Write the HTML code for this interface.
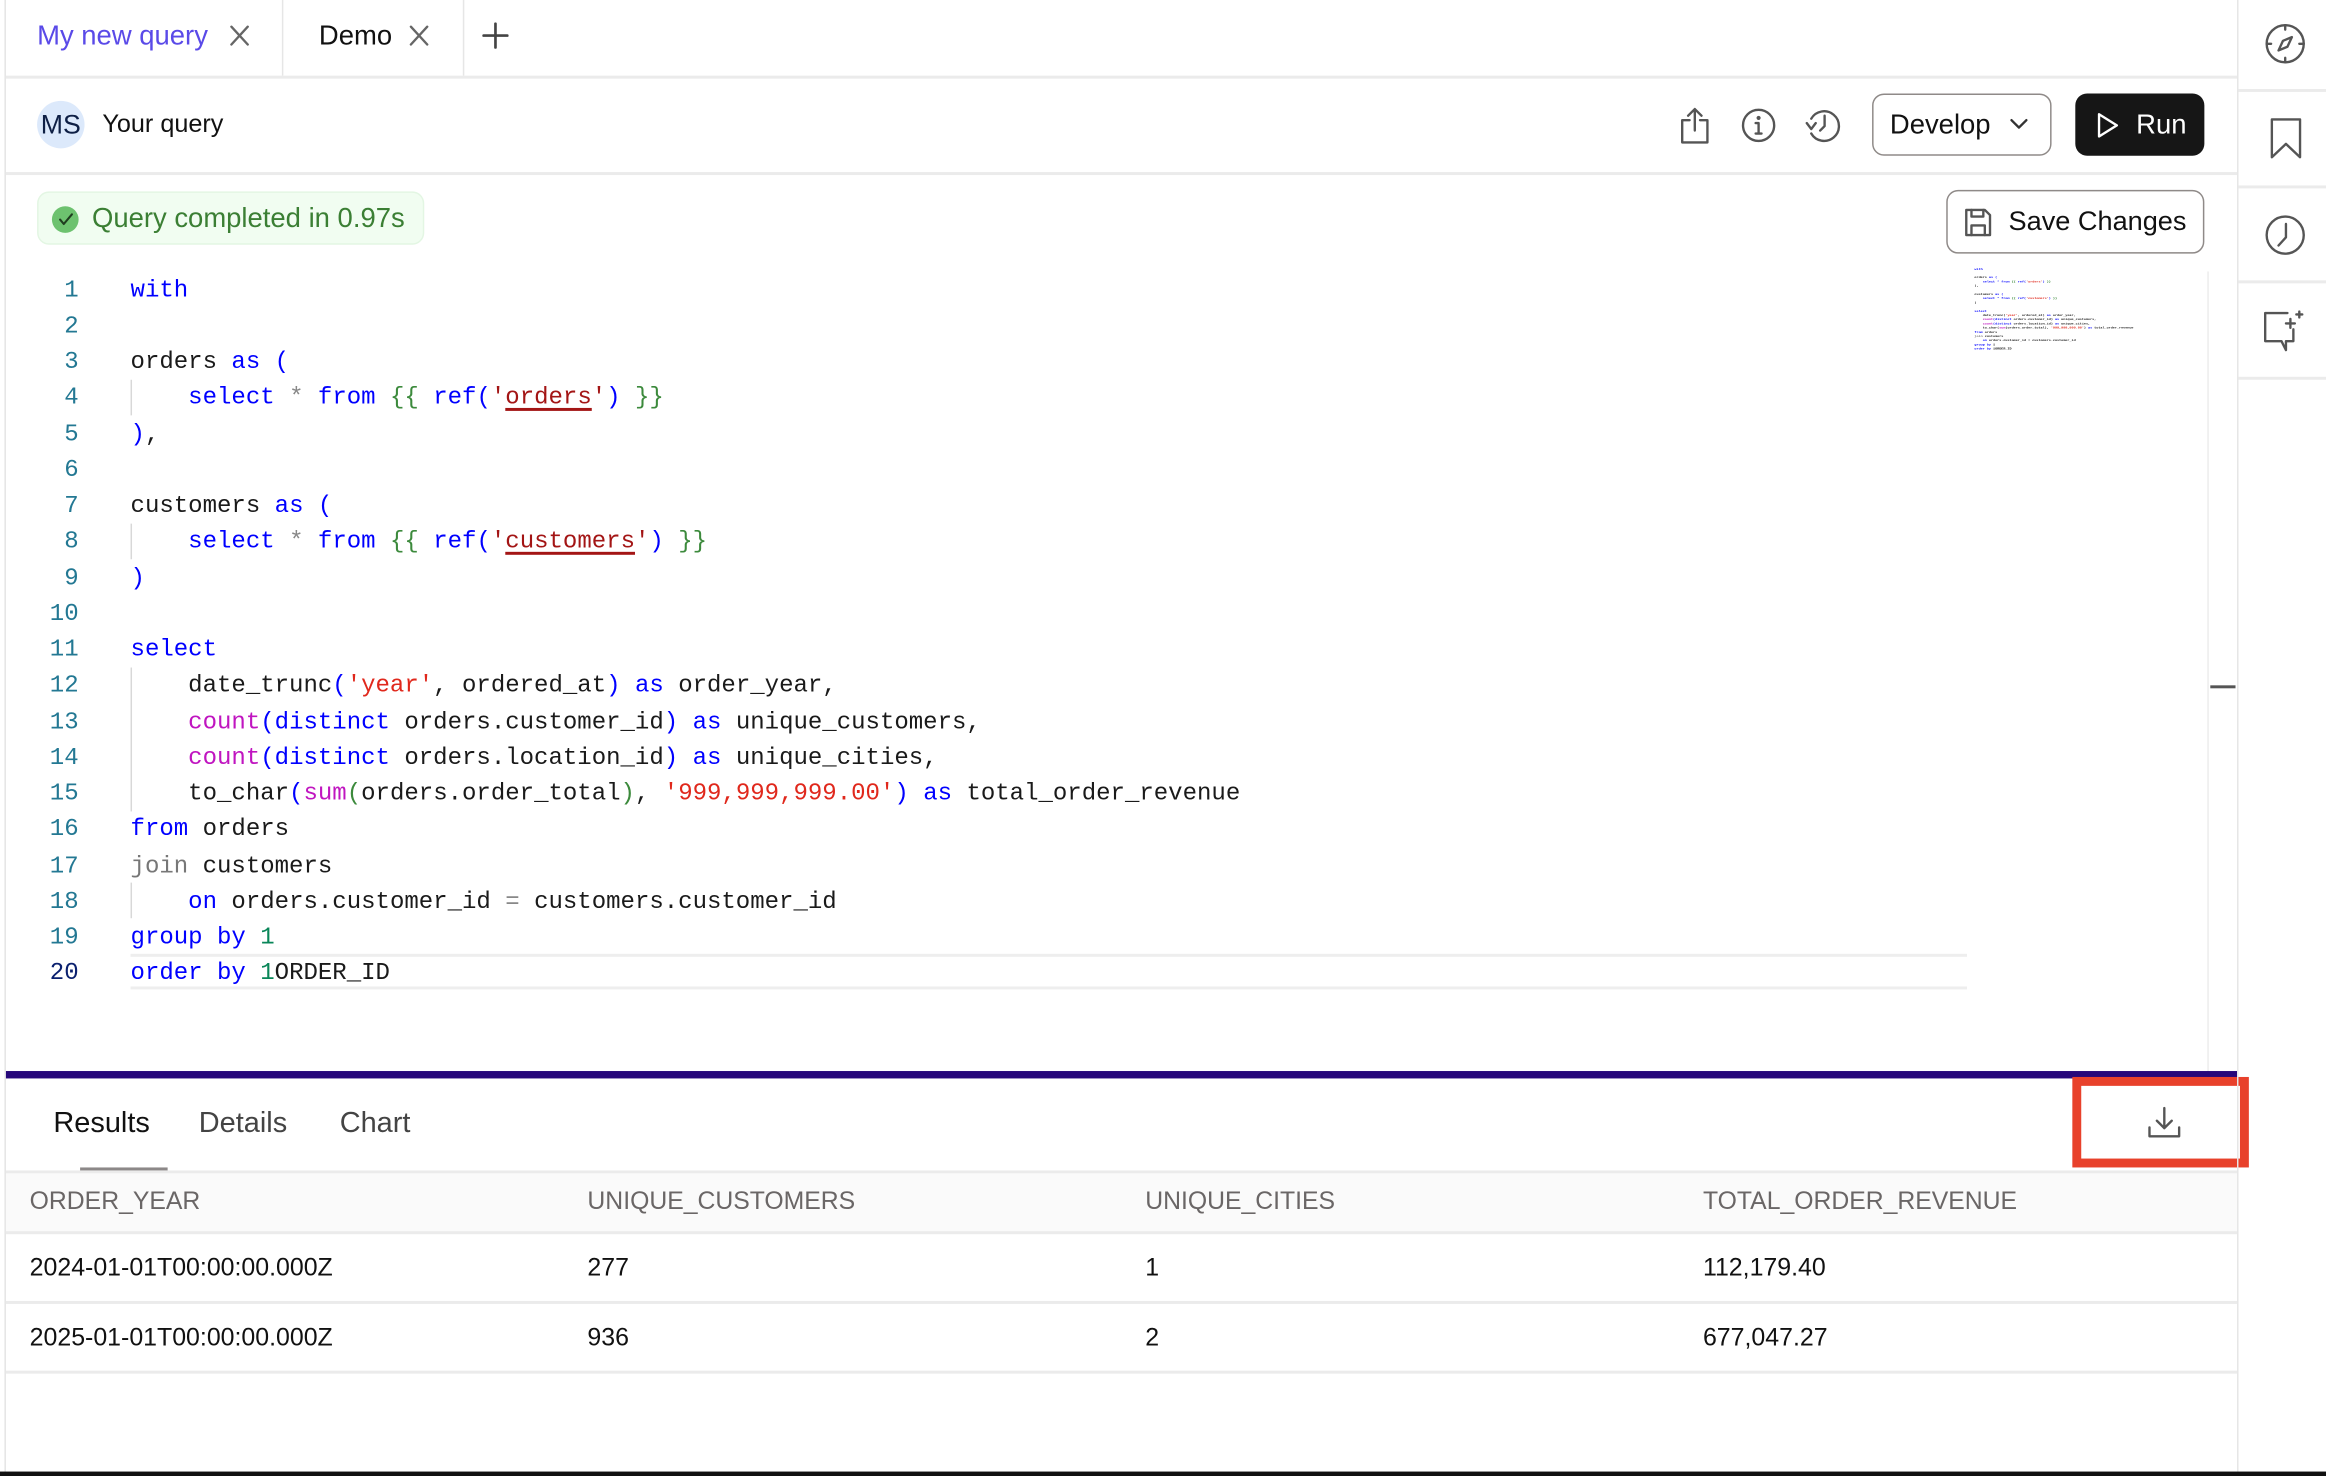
<!DOCTYPE html>
<html><head><meta charset="utf-8"><style>
*{box-sizing:border-box;margin:0;padding:0}
html,body{width:2326px;height:1476px;overflow:hidden;background:#fff}
#w{position:absolute;left:0;top:0;width:1568px;height:995px;transform:scale(1.48342);transform-origin:0 0;font-family:"Liberation Sans",sans-serif;color:#1a1a1a;background:#fff}
.a{position:absolute}
.hl{position:absolute;height:2px;background:#ebebeb}
.vl{position:absolute;width:1px;background:#e6e6e6}
.code{position:absolute;left:0;top:183.5px;font-family:"Liberation Mono",monospace;font-size:16.2px;line-height:24.26px;white-space:pre}
.ln{position:absolute;left:20px;width:33px;text-align:right;color:#237893}
.cl{position:absolute;left:88px}
.k{color:#0000ff}.g{color:#3c8a3c}.s{color:#a31515;text-decoration:underline;text-decoration-thickness:2px;text-underline-offset:3px}
.r{color:#e0281c}.m{color:#c015c0}.j{color:#777}.n{color:#098658}.st{color:#888}
.ig{position:absolute;left:88px;width:1px;background:#d8d8d8}
svg{position:absolute;fill:none;stroke:#555;stroke-width:1.6;stroke-linecap:round;stroke-linejoin:round}
</style></head><body><div id="w">
<div class="vl" style="left:3px;top:0;height:995px;background:#e4e4e4"></div>
<div class="a" style="left:25px;top:13px;font-size:18.5px;color:#5a4ae8">My new query</div>
<svg style="left:155px;top:17px" width="13" height="14"><path d="M1 1L12 13M12 1L1 13" stroke="#666"/></svg>
<div class="vl" style="left:190px;top:0;height:51px"></div>
<div class="a" style="left:215px;top:13px;font-size:18.5px;color:#111">Demo</div>
<svg style="left:276px;top:17px" width="13" height="14"><path d="M1 1L12 13M12 1L1 13" stroke="#666"/></svg>
<div class="vl" style="left:312px;top:0;height:51px"></div>
<svg style="left:325px;top:15px" width="18" height="18"><path d="M9 1V17M1 9H17" stroke="#444" stroke-width="1.8"/></svg>
<div class="hl" style="left:4px;top:51px;width:1504px"></div>
<div class="a" style="left:25px;top:68px;width:32px;height:32px;border-radius:50%;background:#dce9fb;color:#0e1f45;font-size:18px;line-height:32px;text-align:center">MS</div>
<div class="a" style="left:69px;top:74px;font-size:17px;color:#111">Your query</div>
<svg style="left:1131px;top:72px" width="24" height="26"><path d="M8 9H3V24H20V9H15M11.5 16V2M7 6L11.5 1.5 16 6"/></svg>
<svg style="left:1173px;top:72px" width="25" height="25"><circle cx="12.5" cy="12.5" r="10.5"/><path d="M12.5 11V18M10.5 18H14.5M10.5 11H12.5"/><circle cx="12.5" cy="7.5" r=".6" fill="#555"/></svg>
<svg style="left:1216px;top:72px" width="26" height="26"><path d="M5 8A10 10 0 1 1 5 18"/><path d="M2 11L5 15 8 11"/><path d="M14 6V13L11 16"/></svg>
<div class="a" style="left:1262px;top:63px;width:121px;height:42px;border:1.5px solid #8f8a88;border-radius:8px"></div>
<div class="a" style="left:1274px;top:73px;font-size:18.5px;color:#111">Develop</div>
<svg style="left:1355px;top:80px" width="12" height="8"><path d="M1 1L6 6 11 1" stroke="#333"/></svg>
<div class="a" style="left:1399px;top:63px;width:87px;height:42px;background:#161616;border-radius:8px"></div>
<svg style="left:1413px;top:75px" width="16" height="19"><path d="M2 2V17L14 9.5Z" stroke="#fff"/></svg>
<div class="a" style="left:1440px;top:73px;font-size:18.5px;color:#fff">Run</div>
<div class="hl" style="left:4px;top:116px;width:1504px"></div>
<div class="a" style="left:25px;top:129px;width:261px;height:36px;background:#f1fdf1;border:1px solid #e3f6e3;border-radius:8px"></div>
<div class="a" style="left:35px;top:139px;width:18px;height:18px;border-radius:50%;background:#6dc26f"></div>
<svg style="left:39px;top:143px" width="11" height="10"><path d="M1.5 5L4 8 9.5 1.5" stroke="#1f3d1f" stroke-width="1.4"/></svg>
<div class="a" style="left:62px;top:136px;font-size:18.5px;color:#3b7f34">Query completed in 0.97s</div>
<div class="a" style="left:1312px;top:128px;width:174px;height:43px;border:1.5px solid #8f8a88;border-radius:8px"></div>
<svg style="left:1324px;top:140px" width="19" height="20"><path d="M1.5 1.5H14L17.5 5V18.5H1.5Z"/><path d="M5 1.5V6H13V1.5M5 18.5V12H14V18.5" /></svg>
<div class="a" style="left:1354px;top:138px;font-size:18.3px;color:#111">Save Changes</div>
<div class="a" style="left:88px;top:643px;width:1238px;height:24px;border-top:2px solid #eeeeee;border-bottom:2px solid #eeeeee"></div>
<div class="ig" style="top:256px;height:24px"></div>
<div class="ig" style="top:353px;height:24px"></div>
<div class="ig" style="top:450px;height:97px"></div>
<div class="ig" style="top:595px;height:24px"></div>
<div class="code">
<div class="ln" style="top:0">1</div><div class="cl" style="top:0"><span class="k">with</span></div>
<div class="ln" style="top:24.26px">2</div>
<div class="ln" style="top:48.52px">3</div><div class="cl" style="top:48.52px">orders <span class="k">as (</span></div>
<div class="ln" style="top:72.78px">4</div><div class="cl" style="top:72.78px">    <span class="k">select</span> <span class="st">*</span> <span class="k">from</span> <span class="g">{{</span> <span class="k">ref(</span><span style="color:#a31515">'</span><span class="s">orders</span><span style="color:#a31515">'</span><span class="k">)</span> <span class="g">}}</span></div>
<div class="ln" style="top:97.04px">5</div><div class="cl" style="top:97.04px"><span class="k">)</span>,</div>
<div class="ln" style="top:121.3px">6</div>
<div class="ln" style="top:145.56px">7</div><div class="cl" style="top:145.56px">customers <span class="k">as (</span></div>
<div class="ln" style="top:169.82px">8</div><div class="cl" style="top:169.82px">    <span class="k">select</span> <span class="st">*</span> <span class="k">from</span> <span class="g">{{</span> <span class="k">ref(</span><span style="color:#a31515">'</span><span class="s">customers</span><span style="color:#a31515">'</span><span class="k">)</span> <span class="g">}}</span></div>
<div class="ln" style="top:194.08px">9</div><div class="cl" style="top:194.08px"><span class="k">)</span></div>
<div class="ln" style="top:218.34px">10</div>
<div class="ln" style="top:242.6px">11</div><div class="cl" style="top:242.6px"><span class="k">select</span></div>
<div class="ln" style="top:266.86px">12</div><div class="cl" style="top:266.86px">    date_trunc<span class="k">(</span><span class="r">'year'</span>, ordered_at<span class="k">)</span> <span class="k">as</span> order_year,</div>
<div class="ln" style="top:291.12px">13</div><div class="cl" style="top:291.12px">    <span class="m">count</span><span class="k">(distinct</span> orders.customer_id<span class="k">)</span> <span class="k">as</span> unique_customers,</div>
<div class="ln" style="top:315.38px">14</div><div class="cl" style="top:315.38px">    <span class="m">count</span><span class="k">(distinct</span> orders.location_id<span class="k">)</span> <span class="k">as</span> unique_cities,</div>
<div class="ln" style="top:339.64px">15</div><div class="cl" style="top:339.64px">    to_char<span class="k">(</span><span class="m">sum</span><span class="g">(</span>orders.order_total<span class="g">)</span>, <span class="r">'999,999,999.00'</span><span class="k">)</span> <span class="k">as</span> total_order_revenue</div>
<div class="ln" style="top:363.9px">16</div><div class="cl" style="top:363.9px"><span class="k">from</span> orders</div>
<div class="ln" style="top:388.16px">17</div><div class="cl" style="top:388.16px"><span class="j">join</span> customers</div>
<div class="ln" style="top:412.42px">18</div><div class="cl" style="top:412.42px">    <span class="k">on</span> orders.customer_id <span class="st">=</span> customers.customer_id</div>
<div class="ln" style="top:436.68px">19</div><div class="cl" style="top:436.68px"><span class="k">group by</span> <span class="n">1</span></div>
<div class="ln" style="top:460.94px;color:#0b216f">20</div><div class="cl" style="top:460.94px"><span class="k">order by</span> <span class="n">1</span>ORDER_ID</div>
</div>
<div class="a" style="left:1331px;top:180px;width:1200px;height:700px;transform:scale(0.145,0.118);transform-origin:0 0;font-family:'Liberation Mono',monospace;font-size:16px;line-height:24px;white-space:pre;font-weight:bold"><span class="k">with</span>

orders <span class="k">as (</span>
    <span class="k">select * from</span> <span class="g">{{</span> <span class="k">ref(</span><span class="r">'orders'</span><span class="k">)</span> <span class="g">}}</span>
),

customers <span class="k">as (</span>
    <span class="k">select * from</span> <span class="g">{{</span> <span class="k">ref(</span><span class="r">'customers'</span><span class="k">)</span> <span class="g">}}</span>
)

<span class="k">select</span>
    date_trunc(<span class="r">'year'</span>, ordered_at) <span class="k">as</span> order_year,
    <span class="m">count</span><span class="k">(distinct</span> orders.customer_id) <span class="k">as</span> unique_customers,
    <span class="m">count</span><span class="k">(distinct</span> orders.location_id) <span class="k">as</span> unique_cities,
    to_char(<span class="m">sum</span>(orders.order_total), <span class="r">'999,999,999.00'</span>) <span class="k">as</span> total_order_revenue
<span class="k">from</span> orders
<span class="j">join</span> customers
    <span class="k">on</span> orders.customer_id = customers.customer_id
<span class="k">group by</span> 1
<span class="k">order by</span> 1ORDER_ID</div>
<div class="vl" style="left:1488px;top:183px;height:540px;background:#ececec"></div>
<div class="a" style="left:1490px;top:462px;width:17px;height:2px;background:#555"></div>
<div class="a" style="left:4px;top:722px;width:1504px;height:5px;background:#26077a"></div>
<div class="a" style="left:36px;top:746px;font-size:19.5px;color:#111">Results</div>
<div class="a" style="left:134px;top:746px;font-size:19.5px;color:#444">Details</div>
<div class="a" style="left:229px;top:746px;font-size:19.5px;color:#444">Chart</div>
<div class="a" style="left:54px;top:787px;width:59px;height:3px;background:#8c8888"></div>
<div class="hl" style="left:4px;top:789px;width:1504px"></div>
<div class="a" style="left:1397px;top:726px;width:119px;height:61px;border:6px solid #e8412b"></div>
<svg style="left:1447px;top:745px" width="24" height="24"><path d="M12 2V15M7 10.5L12 15.5 17 10.5M2 15V21H22V15"/></svg>
<div class="a" style="left:4px;top:791px;width:1504px;height:40px;background:#fafafa"></div>
<div class="a" style="left:20px;top:800px;font-size:16.7px;color:#6a6666">ORDER_YEAR</div>
<div class="a" style="left:396px;top:800px;font-size:16.7px;color:#6a6666">UNIQUE_CUSTOMERS</div>
<div class="a" style="left:772px;top:800px;font-size:16.7px;color:#6a6666">UNIQUE_CITIES</div>
<div class="a" style="left:1148px;top:800px;font-size:16.7px;color:#6a6666">TOTAL_ORDER_REVENUE</div>
<div class="hl" style="left:4px;top:830px;width:1504px"></div>
<div class="a" style="left:20px;top:845px;font-size:16.8px;color:#111">2024-01-01T00:00:00.000Z</div>
<div class="a" style="left:396px;top:845px;font-size:16.8px;color:#111">277</div>
<div class="a" style="left:772px;top:845px;font-size:16.8px;color:#111">1</div>
<div class="a" style="left:1148px;top:845px;font-size:16.8px;color:#111">112,179.40</div>
<div class="hl" style="left:4px;top:877px;width:1504px"></div>
<div class="a" style="left:20px;top:892px;font-size:16.8px;color:#111">2025-01-01T00:00:00.000Z</div>
<div class="a" style="left:396px;top:892px;font-size:16.8px;color:#111">936</div>
<div class="a" style="left:772px;top:892px;font-size:16.8px;color:#111">2</div>
<div class="a" style="left:1148px;top:892px;font-size:16.8px;color:#111">677,047.27</div>
<div class="hl" style="left:4px;top:924px;width:1504px"></div>
<div class="vl" style="left:1508px;top:0;height:995px;background:#e6e6e6"></div>
<div class="hl" style="left:1509px;top:60px;width:59px"></div>
<div class="hl" style="left:1509px;top:125px;width:59px"></div>
<div class="hl" style="left:1509px;top:189px;width:59px"></div>
<div class="hl" style="left:1509px;top:254px;width:59px"></div>
<svg style="left:1526px;top:15px" width="29" height="29"><circle cx="14.5" cy="14.5" r="12.5"/><path d="M14.5 2V5M14.5 24V27M2 14.5H5M24 14.5H27M19 10L16 16.5 10 19 13 12.5Z"/></svg>
<svg style="left:1530px;top:79px" width="22" height="29"><path d="M1.5 1.5H20.5V27L11 18 1.5 27Z"/></svg>
<svg style="left:1526px;top:144px" width="29" height="29"><circle cx="14.5" cy="14.5" r="12.5"/><path d="M15 7V16L10 21.5"/></svg>
<svg style="left:1525px;top:208px" width="32" height="30"><path d="M17 3H2V22H13L16 28V22H21V14"/><path d="M19 7V13M16 10H22M25 2V6M23 4H27"/></svg>
<div class="a" style="left:0;top:992px;width:1568px;height:3px;background:#111"></div>
</div></body></html>
